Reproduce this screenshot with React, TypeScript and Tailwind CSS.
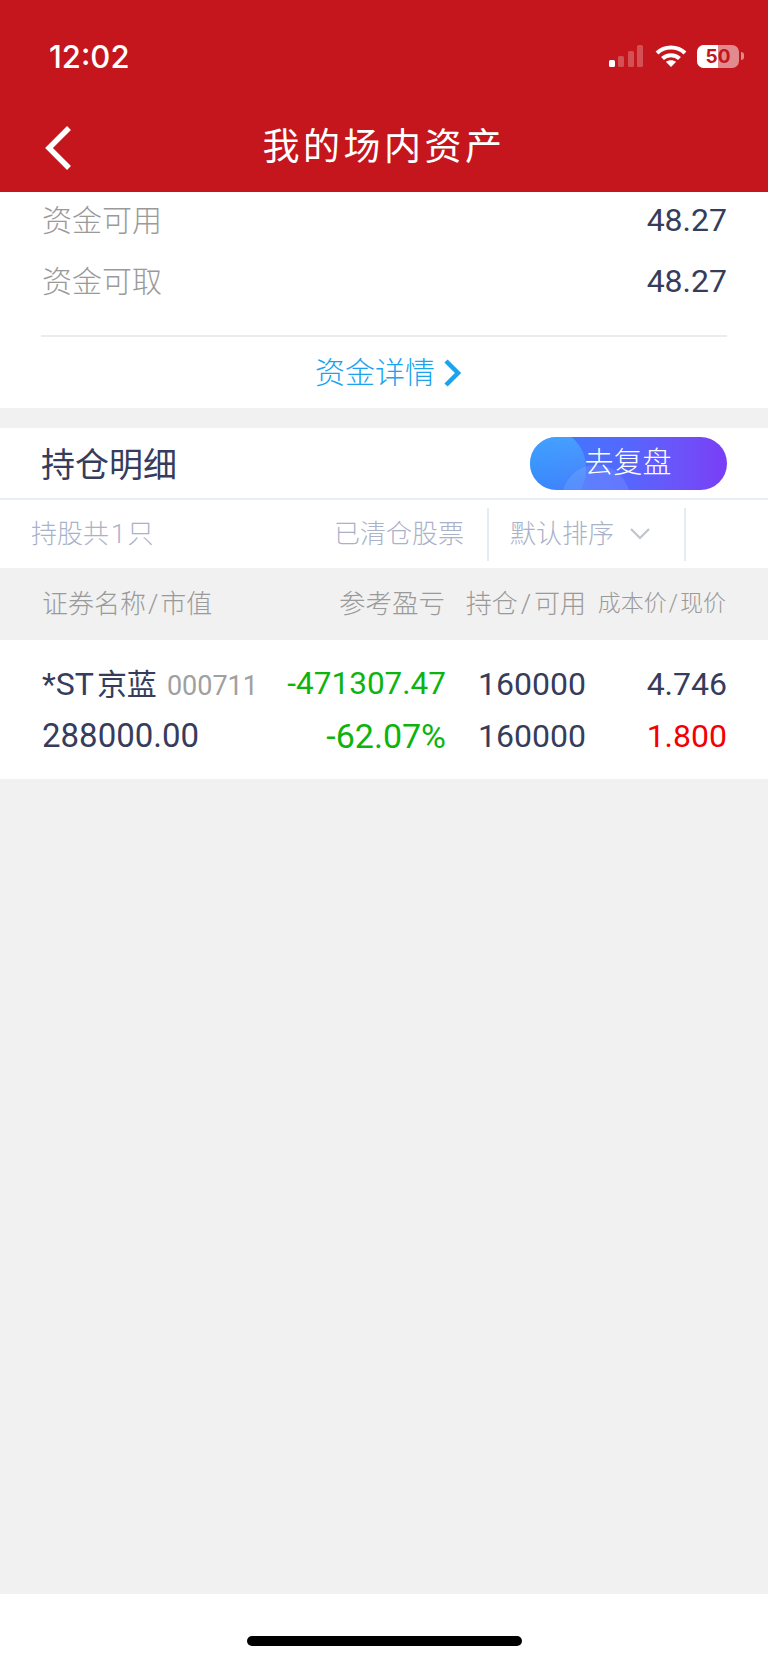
const CJK = "font-['Roboto','Noto_Sans_CJK_SC',sans-serif]";

function StatusIcons() {
  return (
    <div className="flex items-center">
      <svg width="36" height="22" viewBox="0 0 36 22" className="mr-[10px]">
        <rect x="0" y="15" width="6" height="7" rx="1.5" fill="#fff" />
        <rect x="9" y="11" width="6" height="11" rx="1.5" fill="#fff" fillOpacity="0.25" />
        <rect x="19" y="6" width="6" height="16" rx="1.5" fill="#fff" fillOpacity="0.25" />
        <rect x="28" y="0" width="6" height="22" rx="1.5" fill="#fff" fillOpacity="0.25" />
      </svg>
      <svg width="32" height="22" viewBox="0 0 32 22" className="mr-[10px]" fill="none" stroke="#fff" strokeWidth="4">
        <path d="M2 8 C9.5 0.5 22.5 0.5 30 8" />
        <path d="M7.5 13.5 C12 9 20 9 24.5 13.5" />
        <path d="M16 22 L10.8 16.8 C13.5 14.6 18.5 14.6 21.2 16.8 Z" fill="#fff" stroke="none" />
      </svg>
      <div className="relative h-[23px] w-[42px] overflow-hidden rounded-[7px] bg-white/50">
        <div className="h-full w-[21px] bg-white" />
        <span className="absolute inset-0 flex items-center justify-center font-['Inter',sans-serif] text-[19px] font-bold leading-none text-[#c4161c]">
          50
        </span>
      </div>
      <div className="ml-[2px] h-[8px] w-[3px] rounded-r-full bg-white/50" />
    </div>
  );
}

function Header() {
  return (
    <div className="h-[192px] bg-[#c4161c] text-white">
      <div className="flex h-[112px] items-center justify-between pl-[49px] pr-[24px]">
        <span className="font-['Inter',sans-serif] text-[31px] font-medium leading-none">12:02</span>
        <StatusIcons />
      </div>
      <div className="relative flex h-[70px] items-center justify-center">
        <svg width="30" height="46" viewBox="0 0 30 46" className="absolute left-[44px] top-[13px]" fill="none" stroke="#fff" strokeWidth="5.5">
          <path d="M25 3 L5 23 L25 43" />
        </svg>
        <span className="text-[37px] font-normal leading-none tracking-[3.5px]">我的场内资产</span>
      </div>
    </div>
  );
}

function FundRow({ label, value }: { label: string; value: string }) {
  return (
    <div className="flex h-[61px] items-center justify-between">
      <span className="text-[30px] font-light text-[#9a9a9a]">{label}</span>
      <span className="mt-[-2px] text-[32px] text-[#363c5c] [font-weight:380]">{value}</span>
    </div>
  );
}

function HeadCells() {
  return (
    <div className="grid h-[72px] grid-cols-[230px_1fr_140px_141px] items-center whitespace-nowrap bg-[#f1f1f1] pl-[42px] pr-[41px] font-light text-[#9a9a9a]">
      <span className="text-[26px]">
        证券名称<span className="mx-[2px]">/</span>市值
      </span>
      <span className="mr-[1px] text-right text-[26.5px]">参考盈亏</span>
      <span className="text-right text-[26px]">
        持仓<span className="mx-[3px]">/</span>可用
      </span>
      <span className="mr-[1px] text-right text-[23px]">
        成本价<span className="mx-[2px]">/</span>现价
      </span>
    </div>
  );
}

export default function App() {
  return (
    <div className={`flex h-[1663px] w-[768px] flex-col overflow-hidden bg-[#f1f1f1] ${CJK}`}>
      <Header />

      <div className="bg-white pl-[42px] pr-[41px]">
        <div className="ml-[-1px] border-b-2 border-[#ececec] pb-[23px]">
          <div className="ml-[1px] mt-[-2px]">
            <FundRow label="资金可用" value="48.27" />
            <FundRow label="资金可取" value="48.27" />
          </div>
        </div>
        <div className="flex h-[71px] items-center justify-center pl-[9px] text-[#1aa3ee]">
          <span className="text-[30px] font-light">资金详情</span>
          <svg width="20" height="28" viewBox="0 0 20 28" className="ml-[8px]" fill="none" stroke="#1aa3ee" strokeWidth="4.5">
            <path d="M3 2 L15 14 L3 26" />
          </svg>
        </div>
      </div>

      <div className="mt-[20px] flex h-[72px] items-center justify-between border-b-2 border-[#e8edf6] bg-white pl-[41px] pr-[41px]">
        <span className="mt-[5px] text-[34px] font-normal text-[#363c5c]">持仓明细</span>
        <div className="relative flex h-[53px] w-[197px] items-center justify-center overflow-hidden rounded-full bg-gradient-to-r from-[#2f80fb] via-[#5566ff] to-[#7a3df5]">
          <div className="absolute left-[-20px] top-[-8px] h-[80px] w-[76px] rounded-full bg-gradient-to-b from-[#46acff]/85 to-transparent" />
          <div className="absolute left-[32px] top-[28px] h-[70px] w-[68px] rounded-full bg-white/10" />
          <span className="relative pr-[1px] text-[29px] font-light leading-none text-white">去复盘</span>
        </div>
      </div>

      <div className="flex h-[68px] items-center bg-white text-[#a9b2c8]">
        <span className="ml-[31px] flex-1 text-[26px] font-light">
          持股共<span className="mx-[2px]">1</span>只
        </span>
        <span className="text-[26px] font-light">已清仓股票</span>
        <div className="ml-[23px] h-[53px] w-[2px] bg-[#e6eaf2]" />
        <span className="ml-[21px] text-[26px] font-light">默认排序</span>
        <svg width="20" height="12" viewBox="0 0 20 12" className="ml-[16px]" fill="none" stroke="#c0c4cc" strokeWidth="2.2">
          <path d="M1 1 L10 10 L19 1" />
        </svg>
        <div className="ml-[34px] mr-[82px] h-[53px] w-[2px] bg-[#e6eaf2]" />
      </div>

      <HeadCells />

      <div className="grid h-[139px] grid-cols-[230px_1fr_140px_141px] content-center gap-y-[8px] bg-white pl-[42px] pr-[41px] text-[32px] leading-[42px] text-[#363c5c] [font-weight:380]">
        <div className="flex items-baseline whitespace-nowrap">
          <span>*ST</span>
          <span className="ml-[3px] text-[30px]">京蓝</span>
          <span className="ml-[10px] text-[27px] text-[#a0a0a0]">000711</span>
        </div>
        <span className="text-right whitespace-nowrap text-[31.5px] text-[#0db40d]">-471307.47</span>
        <span className="text-right">160000</span>
        <span className="text-right">4.746</span>
        <span className="text-[33px]">288000.00</span>
        <span className="text-right text-[34px] text-[#0db40d]">-62.07%</span>
        <span className="text-right">160000</span>
        <span className="text-right text-[#f40000]">1.800</span>
      </div>

      <div className="flex-1" />

      <div className="flex h-[69px] justify-center bg-white pt-[42px]">
        <div className="h-[10px] w-[275px] rounded-full bg-black" />
      </div>
    </div>
  );
}
